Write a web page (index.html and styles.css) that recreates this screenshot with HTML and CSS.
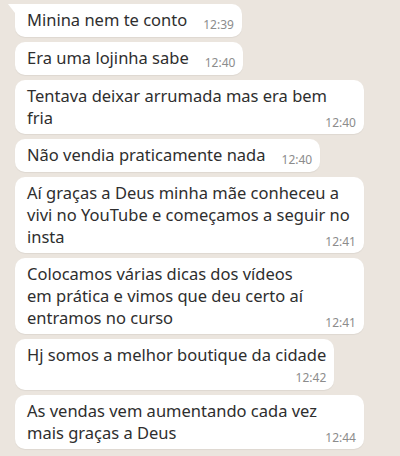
FILE: index.html
```html
<!DOCTYPE html>
<html lang="pt-BR">
<head>
<meta charset="utf-8">
<title>Conversa</title>
<link rel="stylesheet" href="styles.css">
</head>
<body>
<main class="chat">
  <div class="bubble single first">Minina nem te conto<span class="time">12:39</span></div>
  <div class="bubble single">Era uma lojinha sabe<span class="time">12:40</span></div>
  <div class="bubble wide">Tentava deixar arrumada mas era bem<br>fria<span class="time">12:40</span></div>
  <div class="bubble single">Não vendia praticamente nada<span class="time">12:40</span></div>
  <div class="bubble wide">Aí graças a Deus minha mãe conheceu a<br>vivi no YouTube e começamos a seguir no<br>insta<span class="time">12:41</span></div>
  <div class="bubble wide">Colocamos várias dicas dos vídeos<br>em prática e vimos que deu certo aí<br>entramos no curso<span class="time">12:41</span></div>
  <div class="bubble stacked">Hj somos a melhor boutique da cidade<span class="time below">12:42</span></div>
  <div class="bubble wide">As vendas vem aumentando cada vez<br>mais graças a Deus<span class="time">12:44</span></div>
</main>
</body>
</html>
```

FILE: styles.css
```css
html, body {
  margin: 0;
  padding: 0;
  background: #ebe5de;
}

body {
  width: 400px;
  height: 456px;
  overflow: hidden;
  font-family: "Noto Sans", "Open Sans", sans-serif;
}

.chat {
  display: flex;
  flex-direction: column;
  align-items: flex-start;
  gap: 5px;
  padding: 4px 0 0 15px;
}

.bubble {
  position: relative;
  display: flow-root;
  box-sizing: border-box;
  background: #ffffff;
  border-radius: 10px;
  padding: 5px 8px 5px 12px;
  font-size: 16.5px;
  line-height: 22px;
  color: #2e2e2e;
  white-space: nowrap;
  box-shadow: 0 1px 1px rgba(0, 0, 0, 0.06);
}

.bubble.single {
  padding-bottom: 6px;
}

.bubble.wide {
  width: 349px;
}

.bubble.first {
  border-top-left-radius: 0;
}

.bubble.first::before {
  content: "";
  position: absolute;
  left: -7px;
  top: 0;
  width: 0;
  height: 0;
  border-top: 9px solid #ffffff;
  border-left: 7px solid transparent;
}

.time {
  float: right;
  margin: 9px 0 0 16px;
  font-size: 12px;
  line-height: 13px;
  color: #8c8c8c;
}

.time.below {
  float: none;
  display: block;
  text-align: right;
  margin: 5px 0 0 0;
  line-height: 14px;
}
```
